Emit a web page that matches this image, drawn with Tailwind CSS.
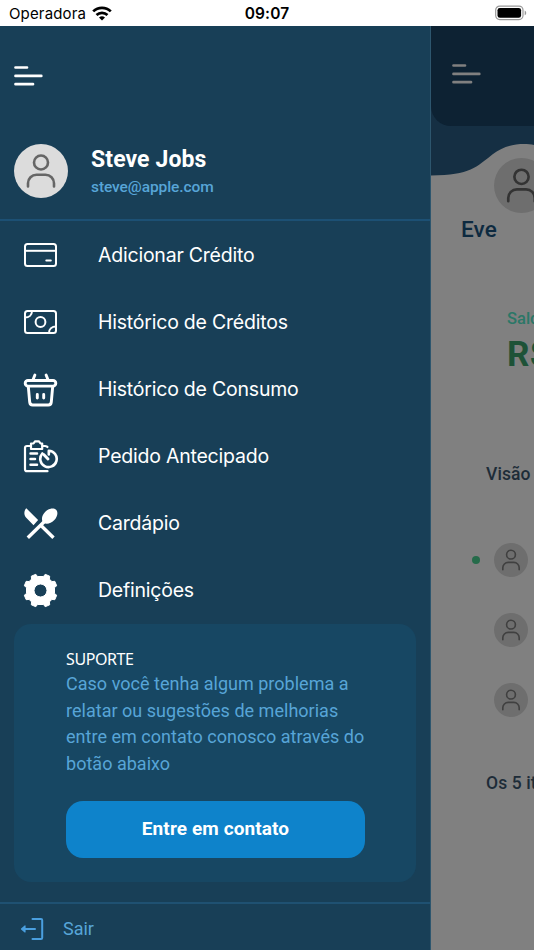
<!DOCTYPE html>
<html lang="pt">
<head>
<meta charset="utf-8">
<title>Menu</title>
<script src="https://cdn.jsdelivr.net/npm/@tailwindcss/browser@4"></script>
</head>
<body class="w-[534px] h-[950px] overflow-hidden bg-white font-['Roboto',sans-serif]">
<svg class="hidden">
  <symbol id="person" viewBox="0 0 54 54">
    <circle cx="27" cy="18.500" r="7" fill="none" stroke="currentColor" stroke-width="2.600"/>
    <path d="M14 42.500v-3.200a8.500 8.500 0 0 1 8.500-8.500h9a8.500 8.500 0 0 1 8.500 8.500v3.200" fill="none" stroke="currentColor" stroke-width="2.600" stroke-linecap="round"/>
  </symbol>
  <symbol id="bars" viewBox="0 0 29 20">
    <path d="M1.500 1.500H13M1.500 9.900H27.300M1.500 18.200H19" stroke="currentColor" stroke-width="2.700" stroke-linecap="round"/>
  </symbol>
</svg>
<div class="flex flex-col h-full">
  <header class="h-[26px] shrink-0 grid grid-cols-3 items-center pl-[9px] pr-[7px] text-black font-['Inter',sans-serif]">
    <div class="flex items-center gap-[6px]">
      <span class="text-[15px] leading-none tracking-[0.150px] pt-[1px]">Operadora</span>
      <svg class="w-[20px] h-[15px]" viewBox="0 0 20 15" fill="none" stroke="#000" stroke-width="2.700"><path d="M1.200 5.400a12.600 12.600 0 0 1 17.600 0M4.500 9a8 8 0 0 1 11 0"/><path d="M10 14.500 7 11.600a4.300 4.300 0 0 1 6 0z" fill="#000" stroke="none"/></svg>
    </div>
    <div class="text-[15.500px] leading-none font-semibold text-center pt-[1px] pr-[2px] tracking-[0.100px]">09:07</div>
    <svg class="justify-self-end w-[32px] h-[16px]" viewBox="0 0 32 16"><rect x=".7" y="1.100" width="27.300" height="13.500" rx="4" fill="none" stroke="#999" stroke-width="1.200"/><rect x="2.500" y="2.900" width="23.600" height="9.900" rx="2.400"/><path d="M29.700 5.500c2 .8 2 4 0 4.800z" fill="#999"/></svg>
  </header>
  <div class="flex flex-1 min-h-0">
    <aside class="w-[431px] shrink-0 bg-[#183f57] flex flex-col border-r border-[#2d566e]">
      <div class="h-[195px] shrink-0 border-b-2 border-[#1c5074] pl-[14px] pt-[40px]">
        <svg class="w-[29px] h-[20px] text-white"><use href="#bars"/></svg>
        <div class="flex items-center gap-[23px] mt-[58px]">
          <div class="w-[54px] h-[54px] rounded-full bg-[#dcdcdc] text-[#666]"><svg class="w-[54px] h-[54px]"><use href="#person"/></svg></div>
          <div>
            <div class="text-[23px] leading-[28px] font-bold text-white tracking-[0.100px]">Steve Jobs</div>
            <div class="text-[15.500px] leading-[20px] mt-[3px] font-medium text-[#57a5d7] tracking-[-0.080px]">steve@apple.com</div>
          </div>
        </div>
      </div>
      <nav class="flex flex-col text-white text-[19.500px] tracking-[-0.220px] font-['Inter',sans-serif] pt-[1px]">
        <a class="h-[67px] flex items-center pl-[23px] gap-[40px]">
          <svg class="w-[35px] h-[35px]" viewBox="0 0 35 35" fill="none" stroke="currentColor" stroke-width="2"><rect x="2" y="6" width="31" height="22" rx="2.500"/><path d="M2 12.800h31"/><path d="M23.300 22.500h4.500" stroke-linecap="round"/></svg>
          <span>Adicionar Crédito</span></a>
        <a class="h-[67px] flex items-center pl-[23px] gap-[40px]">
          <svg class="w-[35px] h-[35px]" viewBox="0 0 35 35" fill="none" stroke="currentColor" stroke-width="2"><rect x="2" y="6" width="31" height="22" rx="2.500"/><circle cx="17.500" cy="17" r="4.900"/><path d="M2 12.500c4 0 7-2.500 7-6.500M26 28c0-4 3-6.500 7-6.500"/></svg>
          <span>Histórico de Créditos</span></a>
        <a class="h-[67px] flex items-center pl-[23px] gap-[40px]">
          <svg class="w-[35px] h-[35px]" viewBox="0 0 35 35" fill="none" stroke="currentColor" stroke-width="2.900" stroke-linecap="round" stroke-linejoin="round"><rect x="2.200" y="8.500" width="30.600" height="5.600" rx="2.800"/><path d="M5.300 14.500 6.700 30c.2 2 1.200 3 3 3h15.600c1.800 0 2.800-1 3-3l1.400-15.500M9.700 8.500l2.200-5.500M25.300 8.500l-2.200-5.500M14.300 22.500v3.500M20.700 22.500v3.500"/></svg>
          <span>Histórico de Consumo</span></a>
        <a class="h-[67px] flex items-center pl-[23px] gap-[40px]">
          <svg class="w-[35px] h-[35px]" viewBox="0 0 35 35" fill="none" stroke="currentColor" stroke-width="2.200" stroke-linecap="round" stroke-linejoin="round"><path d="M7 7H4a2 2 0 0 0-2 2v21.200a2 2 0 0 0 2 2h20.500M19.500 7H22c1.500 0 2.300.5 2.500 1"/><path d="M8 4.500h2.500L12 2.300h4l1.500 2.200H19.200V10H8z"/><path d="M7.500 14.500h6.500M7.500 20h4.500M7.500 25.700h6.500" stroke-width="2.500"/><path d="M25.800 15.500v-3.800A8.200 8.200 0 1 1 19.300 14.500" stroke-width="2.600"/><path d="m20.700 15.500 4.300 4.500" stroke-width="2.900"/></svg>
          <span>Pedido Antecipado</span></a>
        <a class="h-[67px] flex items-center pl-[23px] gap-[40px]">
          <svg class="w-[35px] h-[35px]" viewBox="0 0 35 35" fill="currentColor"><path d="M3.300 2.200 15.100 14l-4.600 5.200L3.500 12C.7 9.200.7 5 3.300 2.200z"/><path d="M20.500 17c-2.700-3-1.700-7.800 1.800-11.300 3.500-3.500 8.500-4.300 10.800-2s1.500 7.100-2 10.600c-3.200 3.200-7 4.500-10.600 2.700z"/><path d="M23 14 4.800 31.800M18 19.500 30.500 31.800" fill="none" stroke="currentColor" stroke-width="3.400"/></svg>
          <span>Cardápio</span></a>
        <a class="h-[67px] flex items-center pl-[23px] gap-[40px]">
          <svg class="w-[35px] h-[35px]" viewBox="0 0 35 35" fill="currentColor"><path fill-rule="evenodd" d="M14.500 3.500 L12.800 1.300 L8.300 3.200 L8.600 6.100 L6.100 8.600 L3.200 8.300 L1.300 12.800 L3.500 14.500 V20.500 L1.300 22.200 L3.200 26.700 L6.100 26.400 L8.600 28.900 L8.300 31.800 L12.800 33.700 L14.500 31.500 H20.500 L22.200 33.700 L26.700 31.800 L26.400 28.900 L28.900 26.400 L31.800 26.700 L33.700 22.200 L31.500 20.500 V14.500 L33.700 12.800 L31.800 8.300 L28.900 8.600 L26.400 6.100 L26.700 3.200 L22.200 1.300 L20.500 3.500z M17.500 11a6.500 6.500 0 1 0 0 13a6.500 6.500 0 1 0 0-13z" stroke="currentColor" stroke-width="1" stroke-linejoin="round"/></svg>
          <span>Definições</span></a>
      </nav>
      <section class="mx-[14px] h-[258px] shrink-0 rounded-[17px] bg-[#174763] pl-[52px] pr-[51px] pt-[24px]">
        <h2 class="text-white text-[16px] leading-[22px] tracking-[-0.400px] font-['Noto_Sans',sans-serif]">SUPORTE</h2>
        <p class="pt-[1px] text-[#57a5d7] text-[18px] leading-[26.500px] whitespace-nowrap tracking-[0.020px]">Caso você tenha algum problema a<br>relatar ou sugestões de melhorias<br>entre em contato conosco através do<br>botão abaixo</p>
        <button class="mt-[24px] w-[299px] h-[57px] rounded-[17px] bg-[#0e83cb] text-white font-bold text-[19px] tracking-[0.100px]">Entre em contato</button>
      </section>
      <div class="mt-[20px] flex-1 border-t-2 border-[#1f5172] flex items-center gap-[19px] pl-[20px] pt-[3px] text-[#57a5d7] text-[18px]">
        <svg class="w-[24px] h-[24px]" viewBox="0 0 24 24" fill="none" stroke="#4a9fdf" stroke-width="2" stroke-linecap="round" stroke-linejoin="round"><path d="M12.500 2H21a1.200 1.200 0 0 1 1.200 1.200v17.600A1.200 1.200 0 0 1 21 22h-8.500"/><path d="M3 12h12"/><path d="M5 9v6l-3.500-3z" fill="#4a9fdf" stroke-width="1.200"/></svg>
        <span>Sair</span>
      </div>
    </aside>
    <main class="flex-1 min-w-0 bg-[#808080] overflow-hidden flex flex-col whitespace-nowrap">
      <div class="relative h-[160px] shrink-0">
        <svg class="absolute left-0 top-0 w-[103px] h-[150px]" viewBox="0 0 103 150"><path d="M0 0H103V119C94 117 76 117 62 128C45 141 40 149 0 149.500z" fill="#152f43"/></svg>
        <div class="relative h-[100px] rounded-bl-[20px] bg-[#0d2233] pl-[21px] pt-[38px]"><svg class="w-[29px] h-[20px] text-[#808080]"><use href="#bars"/></svg></div>
        <div class="absolute left-[63px] top-[132px] w-[55px] h-[55px] rounded-full bg-[#6e6e6e] text-[#333]"><svg class="w-[55px] h-[55px]"><use href="#person"/></svg></div>
      </div>
      <div class="pl-[30px] mt-[28px] text-[22.500px] leading-[30px] font-medium text-[#0d2a40] tracking-[0.100px]">Eve</div>
      <div class="pl-[76px] mt-[64px] text-[16.500px] leading-[22px] font-medium text-[#2b7767]">Saldo</div>
      <div class="pl-[76px] mt-[5px] text-[35px] leading-[40px] font-bold text-[#1d5237]">R$</div>
      <div class="pl-[55px] mt-[87px] text-[17.500px] leading-[24px] font-medium text-[#1d2c38] tracking-[0.100px]">Visão</div>
      <div class="mt-[57px] flex flex-col gap-[36px]">
        <div class="flex items-center pl-[41px]"><i class="w-2 h-2 rounded-full bg-[#256b4a] mr-[14px]"></i><div class="w-[34px] h-[34px] shrink-0 rounded-full bg-[#6e6e6e] text-[#404040]"><svg class="w-[34px] h-[34px]"><use href="#person"/></svg></div></div>
        <div class="w-[34px] h-[34px] ml-[63px] rounded-full bg-[#6e6e6e] text-[#404040]"><svg class="w-[34px] h-[34px]"><use href="#person"/></svg></div>
        <div class="w-[34px] h-[34px] ml-[63px] rounded-full bg-[#6e6e6e] text-[#404040]"><svg class="w-[34px] h-[34px]"><use href="#person"/></svg></div>
      </div>
      <div class="pl-[55px] mt-[54px] text-[17.500px] leading-[24px] font-medium text-[#1d2c38] tracking-[0.100px]">Os 5 it</div>
    </main>
  </div>
</div>
</body>
</html>
